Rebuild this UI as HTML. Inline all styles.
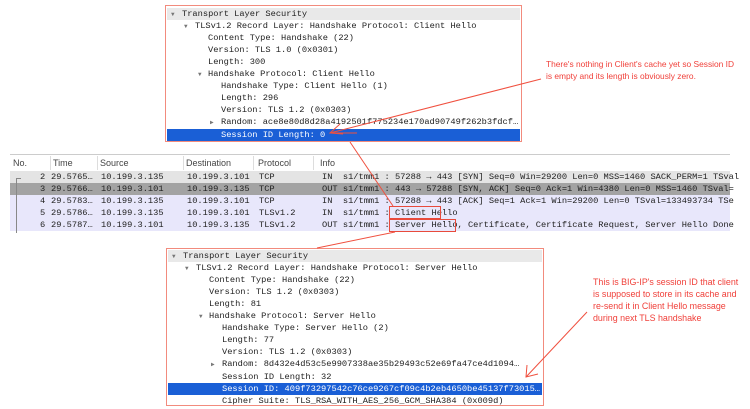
<!DOCTYPE html>
<html><head><meta charset="utf-8"><style>
body{margin:0;width:750px;height:409px;background:#fff;position:relative;overflow:hidden;font-family:"Liberation Mono",monospace;}
.m{position:absolute;font-size:8.7px;line-height:12px;white-space:pre;color:#222;}
.box{position:absolute;border:1.5px solid #f28b7d;box-sizing:border-box;background:#fff;}
.hl{position:absolute;background:#1a5fd6;}
.hd{position:absolute;background:#e9e9e9;}
.s{position:absolute;font-family:"Liberation Sans",sans-serif;font-size:9px;color:#444;line-height:14px;}
.a{position:absolute;font-family:"Liberation Sans",sans-serif;color:#f0403a;line-height:12px;white-space:nowrap;}
.t{font-size:6px;color:#777;}
</style></head><body>
<!-- top box -->
<div class="box" style="left:165px;top:5px;width:357px;height:137px"></div>
<div class="hd" style="left:167px;top:8px;width:353px;height:12px"></div>
<div class="hl" style="left:167px;top:129px;width:353px;height:12px"></div>
<div class="m" style="left:171px;top:8px"><span class="t">▼</span></div><div class="m" style="left:182px;top:8px">Transport Layer Security</div>
<div class="m" style="left:184px;top:20px"><span class="t">▼</span></div><div class="m" style="left:195px;top:20px">TLSv1.2 Record Layer: Handshake Protocol: Client Hello</div>
<div class="m" style="left:208px;top:32px">Content Type: Handshake (22)</div>
<div class="m" style="left:208px;top:44px">Version: TLS 1.0 (0x0301)</div>
<div class="m" style="left:208px;top:56px">Length: 300</div>
<div class="m" style="left:198px;top:68px"><span class="t">▼</span></div><div class="m" style="left:208px;top:68px">Handshake Protocol: Client Hello</div>
<div class="m" style="left:221px;top:80px">Handshake Type: Client Hello (1)</div>
<div class="m" style="left:221px;top:92px">Length: 296</div>
<div class="m" style="left:221px;top:104px">Version: TLS 1.2 (0x0303)</div>
<div class="m" style="left:210px;top:116px"><span class="t">▶</span></div><div class="m" style="left:221px;top:116px">Random: ace8e80d8d28a4192501f775234e170ad90749f262b3fdcf…</div>
<div class="m" style="left:221px;top:129px;color:#fff">Session ID Length: 0</div>

<!-- table -->
<div style="position:absolute;left:10px;top:154px;width:720px;height:1px;background:#ccc"></div>
<div style="position:absolute;left:10px;top:171px;width:720px;height:12px;background:#e4e4e4"></div>
<div style="position:absolute;left:10px;top:183px;width:720px;height:12px;background:#a3a3a3"></div>
<div style="position:absolute;left:10px;top:195px;width:720px;height:36px;background:#e8e7fb"></div>
<div style="position:absolute;left:50px;top:156px;width:1px;height:14px;background:#ddd"></div>
<div style="position:absolute;left:97px;top:156px;width:1px;height:14px;background:#ddd"></div>
<div style="position:absolute;left:183px;top:156px;width:1px;height:14px;background:#ddd"></div>
<div style="position:absolute;left:253px;top:156px;width:1px;height:14px;background:#ddd"></div>
<div style="position:absolute;left:313px;top:156px;width:1px;height:14px;background:#ddd"></div>
<div class="s" style="left:13px;top:156px">No.</div>
<div class="s" style="left:53px;top:156px">Time</div>
<div class="s" style="left:100px;top:156px">Source</div>
<div class="s" style="left:186px;top:156px">Destination</div>
<div class="s" style="left:258px;top:156px">Protocol</div>
<div class="s" style="left:320px;top:156px">Info</div>
<div style="position:absolute;left:16px;top:178px;width:1px;height:55px;background:#888"></div>
<div style="position:absolute;left:16px;top:178px;width:5px;height:1px;background:#888"></div>

<div class="m" style="left:40px;top:171px">2</div><div class="m" style="left:51px;top:171px">29.5765…</div><div class="m" style="left:101px;top:171px">10.199.3.135</div><div class="m" style="left:187px;top:171px">10.199.3.101</div><div class="m" style="left:259px;top:171px">TCP</div>
<div class="m" style="left:40px;top:183px">3</div><div class="m" style="left:51px;top:183px">29.5766…</div><div class="m" style="left:101px;top:183px">10.199.3.101</div><div class="m" style="left:187px;top:183px">10.199.3.135</div><div class="m" style="left:259px;top:183px">TCP</div>
<div class="m" style="left:40px;top:195px">4</div><div class="m" style="left:51px;top:195px">29.5783…</div><div class="m" style="left:101px;top:195px">10.199.3.135</div><div class="m" style="left:187px;top:195px">10.199.3.101</div><div class="m" style="left:259px;top:195px">TCP</div>
<div class="m" style="left:40px;top:207px">5</div><div class="m" style="left:51px;top:207px">29.5786…</div><div class="m" style="left:101px;top:207px">10.199.3.135</div><div class="m" style="left:187px;top:207px">10.199.3.101</div><div class="m" style="left:259px;top:207px">TLSv1.2</div>
<div class="m" style="left:40px;top:219px">6</div><div class="m" style="left:51px;top:219px">29.5787…</div><div class="m" style="left:101px;top:219px">10.199.3.101</div><div class="m" style="left:187px;top:219px">10.199.3.135</div><div class="m" style="left:259px;top:219px">TLSv1.2</div>

<div class="m" style="left:322px;top:171px">IN  s1/tmm1 : 57288 → 443 [SYN] Seq=0 Win=29200 Len=0 MSS=1460 SACK_PERM=1 TSval</div>
<div class="m" style="left:322px;top:183px">OUT s1/tmm1 : 443 → 57288 [SYN, ACK] Seq=0 Ack=1 Win=4380 Len=0 MSS=1460 TSval=</div>
<div class="m" style="left:322px;top:195px">IN  s1/tmm1 : 57288 → 443 [ACK] Seq=1 Ack=1 Win=29200 Len=0 TSval=133493734 TSe</div>
<div class="m" style="left:322px;top:207px">IN  s1/tmm1 : Client Hello</div>
<div class="m" style="left:322px;top:219px">OUT s1/tmm1 : Server Hello, Certificate, Certificate Request, Server Hello Done</div>
<div style="position:absolute;left:389px;top:206px;width:52px;height:13px;border:1px solid #e84a3c;box-sizing:border-box"></div>
<div style="position:absolute;left:389px;top:219px;width:67px;height:13px;border:1px solid #e84a3c;box-sizing:border-box"></div>

<!-- bottom box -->
<div class="box" style="left:166px;top:248px;width:378px;height:158px"></div>
<div class="hd" style="left:168px;top:250px;width:374px;height:12px"></div>
<div class="hl" style="left:168px;top:383px;width:374px;height:12px"></div>
<div class="m" style="left:172px;top:250px"><span class="t">▼</span></div><div class="m" style="left:183px;top:250px">Transport Layer Security</div>
<div class="m" style="left:185px;top:262px"><span class="t">▼</span></div><div class="m" style="left:196px;top:262px">TLSv1.2 Record Layer: Handshake Protocol: Server Hello</div>
<div class="m" style="left:209px;top:274px">Content Type: Handshake (22)</div>
<div class="m" style="left:209px;top:286px">Version: TLS 1.2 (0x0303)</div>
<div class="m" style="left:209px;top:298px">Length: 81</div>
<div class="m" style="left:199px;top:310px"><span class="t">▼</span></div><div class="m" style="left:209px;top:310px">Handshake Protocol: Server Hello</div>
<div class="m" style="left:222px;top:322px">Handshake Type: Server Hello (2)</div>
<div class="m" style="left:222px;top:334px">Length: 77</div>
<div class="m" style="left:222px;top:346px">Version: TLS 1.2 (0x0303)</div>
<div class="m" style="left:211px;top:358px"><span class="t">▶</span></div><div class="m" style="left:222px;top:358px">Random: 8d432e4d53c5e9907338ae35b29493c52e69fa47ce4d1094…</div>
<div class="m" style="left:222px;top:371px">Session ID Length: 32</div>
<div class="m" style="left:222px;top:383px;color:#fff">Session ID: 409f73297542c76ce9267cf09c4b2eb4650be45137f73015…</div>
<div class="m" style="left:222px;top:395px">Cipher Suite: TLS_RSA_WITH_AES_256_GCM_SHA384 (0x009d)</div>

<!-- annotations -->
<div class="a" style="left:546px;top:58px;font-size:8.4px">There's nothing in Client's cache yet so Session ID<br>is empty and its length is obviously zero.</div>
<div class="a" style="left:593px;top:276px;font-size:8.9px">This is BIG-IP's session ID that client<br>is supposed to store in its cache and<br>re-send it in Client Hello message<br>during next TLS handshake</div>
<svg style="position:absolute;left:0;top:0" width="750" height="409">
<g stroke="#f0503f" stroke-width="1" fill="none">
<line x1="541" y1="79" x2="330" y2="133"/>
<polyline points="340,124 330,133 343,134"/>
<line x1="332" y1="133" x2="357" y2="133"/>
<line x1="350" y1="142" x2="393" y2="206"/>
<line x1="395" y1="232" x2="317" y2="248"/>
<line x1="587" y1="312" x2="526" y2="377"/>
<polyline points="527,365 526,377 538,374"/>
</g></svg>
</body></html>
